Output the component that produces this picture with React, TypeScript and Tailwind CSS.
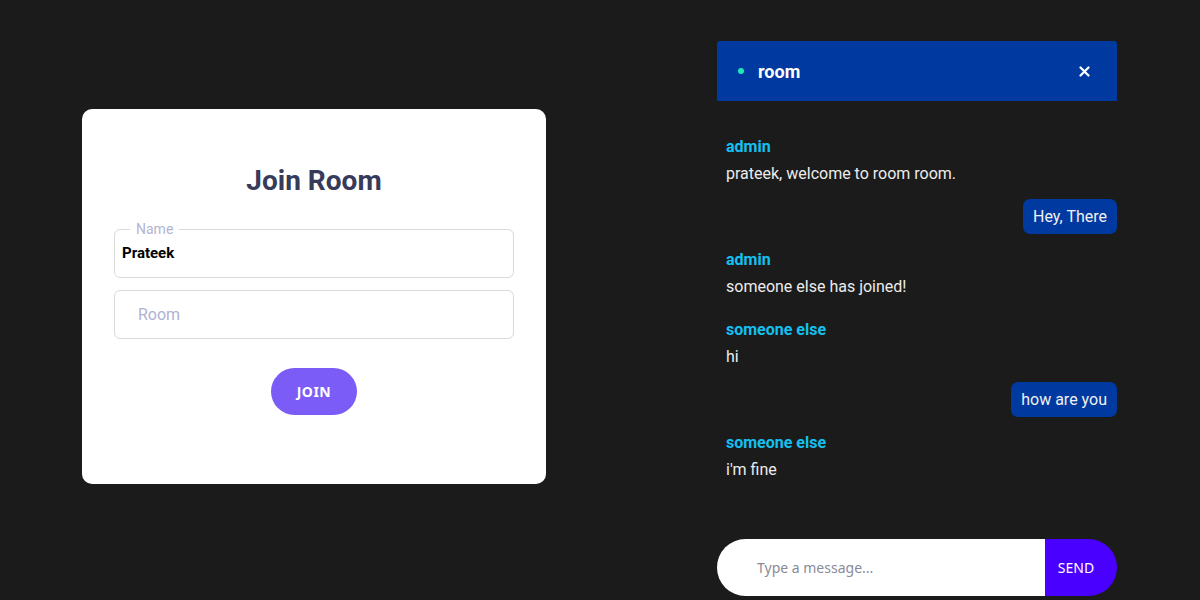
const messages: {
  own: boolean;
  user?: string;
  text: string;
  gap: string;
}[] = [
  { own: false, user: "admin", text: "prateek, welcome to room room.", gap: "mt-0" },
  { own: true, text: "Hey, There", gap: "mt-[13px]" },
  { own: false, user: "admin", text: "someone else has joined!", gap: "mt-[14px]" },
  { own: false, user: "someone else", text: "hi", gap: "mt-[19px]" },
  { own: true, text: "how are you", gap: "mt-[13px]" },
  { own: false, user: "someone else", text: "i'm fine", gap: "mt-[14px]" },
];

function JoinCard() {
  return (
    <div className="mt-[109px] w-[464px] h-[375px] bg-white rounded-[10px] px-[32px] flex flex-col items-center">
      <h1 className="mt-[55px] text-[28px] leading-[34px] font-bold text-[#383a5a]">
        Join Room
      </h1>

      {/* Name field with floating label */}
      <div className="relative mt-[31px] w-[400px] h-[49px] border border-[#dadada] rounded-[6px] flex items-center px-[7px]">
        <span className="absolute -top-[10px] left-[15px] bg-white px-[6px] text-[14px] leading-[18px] text-[#b3b6cf]">
          Name
        </span>
        <input
          defaultValue="Prateek"
          className="w-full outline-none bg-transparent text-[15px] font-bold text-black"
        />
      </div>

      <div className="mt-[12px] w-[400px] h-[49px] border border-[#dadada] rounded-[6px] flex items-center pl-[23px] pt-[1px]">
        <input
          placeholder="Room"
          className="w-full outline-none bg-transparent text-[16px] text-black placeholder:text-[#aeb2d0]"
        />
      </div>

      <button className="mt-[29px] w-[86px] h-[47px] rounded-full bg-[#7b5cf6] text-white text-[14px] font-bold tracking-[0.5px] [font-family:'Noto_Sans',sans-serif]">
        JOIN
      </button>
    </div>
  );
}

function ChatPanel() {
  return (
    <div className="mt-[41px] w-[400px] h-[555px] flex flex-col">
      <div className="h-[60px] bg-[#003aa0] rounded-t-[3px] flex items-center pl-[21px] pr-[27px]">
        <span className="w-[6px] h-[6px] rounded-full bg-[#1de9b6]" />
        <span className="ml-[14px] text-[18px] font-bold text-white">room</span>
        <button className="ml-auto">
          <svg width="11" height="11" viewBox="0 0 11 11">
            <path d="M1.5 1.5 L9.5 9.5 M9.5 1.5 L1.5 9.5" stroke="white" strokeWidth="2.2" strokeLinecap="round" />
          </svg>
        </button>
      </div>

      <div className="flex-1 flex flex-col pt-[34px]">
        {messages.map((m, i) =>
          m.own ? (
            <div key={i} className={`${m.gap} flex justify-end`}>
              <div className="h-[35px] px-[10px] rounded-[7px] bg-[#0039a0] text-[#f0f0f0] text-[16px] flex items-center">
                {m.text}
              </div>
            </div>
          ) : (
            <div key={i} className={`${m.gap} pl-[9px] flex flex-col`}>
              <span className="text-[16px] leading-[24px] font-bold text-[#14c0f0]">{m.user}</span>
              <span className="mt-[3px] text-[16px] leading-[24px] text-[#ececec]">{m.text}</span>
            </div>
          ),
        )}
      </div>

      <div className="h-[57px] flex rounded-full overflow-hidden">
        <input
          placeholder="Type a message..."
          className="flex-1 bg-white pl-[40px] outline-none text-[14px] text-[#333] placeholder:text-[#8a8a98] [font-family:'Noto_Sans',sans-serif]"
        />
        <button className="w-[72px] bg-[#4a00ff] text-white text-[14px] pr-[10px] [font-family:'Noto_Sans',sans-serif]">
          SEND
        </button>
      </div>
    </div>
  );
}

export default function App() {
  return (
    <div className="w-[1200px] h-[600px] bg-[#1b1b1b] flex items-start pl-[82px] gap-[171px] [font-family:Roboto,'Liberation_Sans',sans-serif] overflow-hidden">
      <JoinCard />
      <ChatPanel />
    </div>
  );
}
